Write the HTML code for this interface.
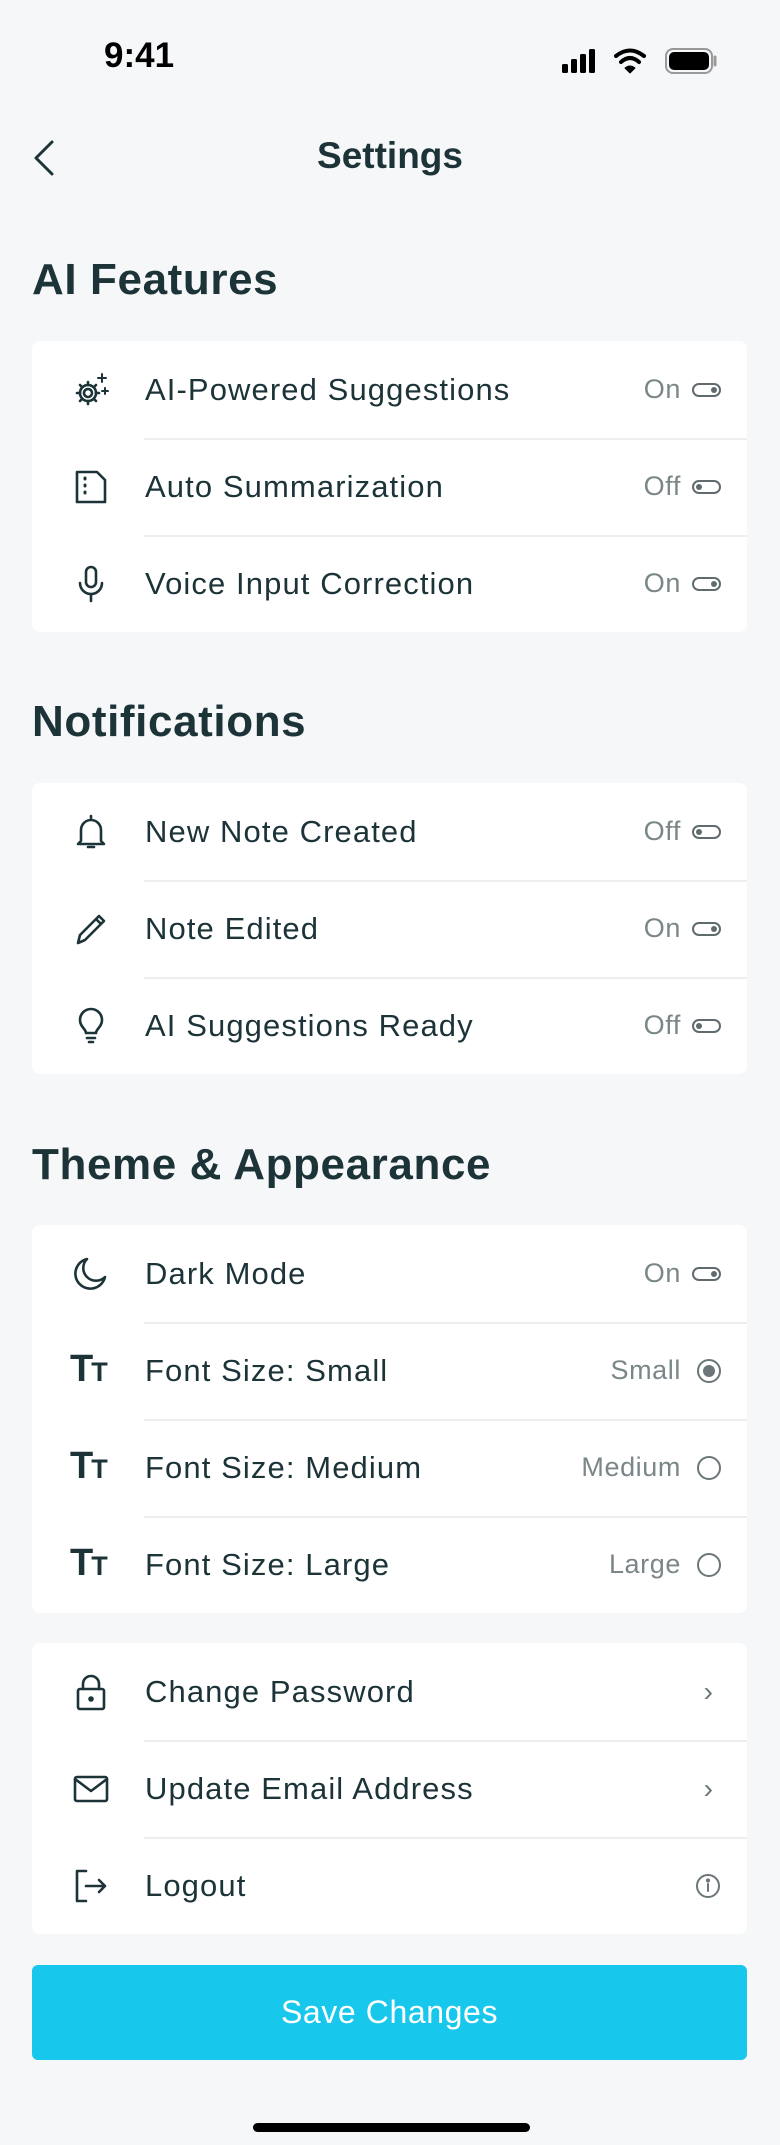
<!DOCTYPE html>
<html><head><meta charset="utf-8"><style>
*{margin:0;padding:0;box-sizing:border-box}
body{width:780px;height:2145px;background:#f6f7f9;font-family:"Liberation Sans",sans-serif;color:#1c3338;position:relative;overflow:hidden}
.abs{position:absolute}
.h{position:absolute;left:32px;font-size:44px;font-weight:bold;letter-spacing:0.6px}
.card{position:absolute;left:32px;width:715px;background:#fff;border-radius:8px}
.row{height:97px;position:relative}
.row+.row:before{content:"";position:absolute;left:112px;right:0;top:0;border-top:2px solid #eceef0}
.ic{position:absolute;left:40px;top:30px;width:38px;height:38px}
.t{position:absolute;left:113px;top:0;line-height:97px;font-size:31px;letter-spacing:1.1px}
.v{position:absolute;right:66px;top:0;line-height:97px;font-size:27px;color:#7a8688;letter-spacing:0.6px}
.tg{position:absolute;right:26px;top:42px;width:29px;height:14px;border:2px solid #5f6b6e;border-radius:7px}
.tg:after{content:"";position:absolute;right:2px;top:2px;width:6px;height:6px;border-radius:50%;background:#5f6b6e}
.rd{position:absolute;right:26px;top:37px;width:24px;height:24px;border:2px solid #6b7678;border-radius:50%}
.rd.on:after{content:"";position:absolute;left:4px;top:4px;width:12px;height:12px;border-radius:50%;background:#6b7678}
.ch{position:absolute;right:34px;top:33px;font-size:28px;color:#6b7678}
svg{fill:none;stroke:#1c3338;stroke-width:2.6;stroke-linecap:round;stroke-linejoin:round}
.tt{position:absolute;left:38px;top:27px;font-weight:bold;font-size:38px;line-height:40px;letter-spacing:-2px}
.tt small{font-size:27px}
</style></head><body>
<div class="abs" style="left:104px;top:36px;font-size:35px;font-weight:bold;color:#000">9:41</div>
<svg class="abs" style="left:560px;top:46px;width:160px;height:30px" viewBox="0 0 160 30">
<g fill="#000" stroke="none"><rect x="2" y="18" width="6" height="9" rx="1.5"/><rect x="11" y="13" width="6" height="14" rx="1.5"/><rect x="20" y="8" width="6" height="19" rx="1.5"/><rect x="29" y="3" width="6" height="24" rx="1.5"/></g>
<path d="M56 10 Q70 -1 84 10" stroke="#000" stroke-width="4"/><path d="M61 16 Q70 8 79 16" stroke="#000" stroke-width="4"/><path d="M65 22 L70 27 L75 22 Q70 18 65 22Z" fill="#000" stroke="#000" stroke-width="1"/>
<rect x="106" y="3" width="46" height="24" rx="7" stroke="#999" stroke-width="2"/><rect x="109" y="6" width="40" height="18" rx="5" fill="#000" stroke="none"/><path d="M155 11 v8" stroke="#999" stroke-width="3"/>
</svg>
<svg class="abs" style="left:30px;top:138px;width:30px;height:40px" viewBox="0 0 30 40"><path d="M22 4 L6 20 L22 36" stroke-width="3"/></svg>
<div class="abs" style="left:0;width:780px;text-align:center;top:135px;font-size:37px;font-weight:bold">Settings</div>

<div class="h" style="top:255px">AI Features</div>
<div class="card" style="top:341px">
<div class="row"><svg class="ic" viewBox="0 0 38 38"><circle cx="16" cy="22" r="4"/><path d="M16 11v3M16 30v3M5 22h3M24 22h3M8 14l2 2M22 28l2 2M8 30l2-2M22 16l2-2"/><circle cx="16" cy="22" r="8"/><path d="M30 3v8M26 7h8M33 17v6M30 20h6" stroke-width="2"/></svg><div class="t">AI-Powered Suggestions</div><div class="v">On</div><div class="tg"></div></div>
<div class="row"><svg class="ic" viewBox="0 0 38 38"><path d="M5 4h20l8 8v22H5z"/><path d="M13 10v1M13 17v1M13 24v1" stroke-width="3"/></svg><div class="t">Auto Summarization</div><div class="v">Off</div><div class="tg" style="transform:scaleX(-1)"></div></div>
<div class="row"><svg class="ic" viewBox="0 0 38 38"><rect x="14" y="2" width="10" height="20" rx="5"/><path d="M8 18a11 11 0 0 0 22 0M19 29v7"/></svg><div class="t">Voice Input Correction</div><div class="v">On</div><div class="tg"></div></div>
</div>

<div class="h" style="top:697px">Notifications</div>
<div class="card" style="top:783px">
<div class="row"><svg class="ic" viewBox="0 0 38 38"><path d="M9 28V17a10 10 0 0 1 20 0v11l3 3H6z M19 3v4M16 34h6"/></svg><div class="t">New Note Created</div><div class="v">Off</div><div class="tg" style="transform:scaleX(-1)"></div></div>
<div class="row"><svg class="ic" viewBox="0 0 38 38"><path d="M6 33l2-8L27 6l5 5-19 19z M24 9l5 5"/></svg><div class="t">Note Edited</div><div class="v">On</div><div class="tg"></div></div>
<div class="row"><svg class="ic" viewBox="0 0 38 38"><path d="M14 26c0-4-6-6-6-13a11 11 0 0 1 22 0c0 7-6 9-6 13zM15 31h8M17 35h4"/></svg><div class="t">AI Suggestions Ready</div><div class="v">Off</div><div class="tg" style="transform:scaleX(-1)"></div></div>
</div>

<div class="h" style="top:1140px">Theme &amp; Appearance</div>
<div class="card" style="top:1225px">
<div class="row"><svg class="ic" viewBox="0 0 38 38"><path d="M15 4a15 15 0 1 0 18 18A12 12 0 0 1 15 4z"/></svg><div class="t">Dark Mode</div><div class="v">On</div><div class="tg"></div></div>
<div class="row"><div class="tt">T<small>T</small></div><div class="t">Font Size: Small</div><div class="v">Small</div><div class="rd on"></div></div>
<div class="row"><div class="tt">T<small>T</small></div><div class="t">Font Size: Medium</div><div class="v">Medium</div><div class="rd"></div></div>
<div class="row"><div class="tt">T<small>T</small></div><div class="t">Font Size: Large</div><div class="v">Large</div><div class="rd"></div></div>
</div>

<div class="card" style="top:1643px">
<div class="row"><svg class="ic" viewBox="0 0 38 38"><rect x="6" y="16" width="26" height="20" rx="2"/><path d="M11 16v-5a8 8 0 0 1 16 0v5"/><circle cx="19" cy="26" r="1.5" fill="#1c3338"/></svg><div class="t">Change Password</div><div class="ch">›</div></div>
<div class="row"><svg class="ic" viewBox="0 0 38 38"><rect x="3" y="7" width="32" height="24" rx="2"/><path d="M3 9l16 12 16-12"/></svg><div class="t">Update Email Address</div><div class="ch">›</div></div>
<div class="row"><svg class="ic" viewBox="0 0 38 38"><path d="M14 4H5v30h9M14 19h19M27 13l6 6-6 6"/></svg><div class="t">Logout</div><svg class="abs" style="right:26px;top:36px;width:26px;height:26px" viewBox="0 0 26 26"><circle cx="13" cy="13" r="11" stroke="#6b7678" stroke-width="2"/><path d="M13 11v7" stroke="#6b7678" stroke-width="2"/><circle cx="13" cy="7.5" r="0.8" fill="#6b7678" stroke="#6b7678"/></svg></div>
</div>

<div class="abs" style="left:32px;top:1965px;width:715px;height:95px;background:#17c7ec;border-radius:6px;color:#fff;font-size:32px;letter-spacing:0.6px;text-align:center;line-height:95px">Save Changes</div>
<div class="abs" style="left:253px;top:2123px;width:277px;height:9px;background:#000;border-radius:5px"></div>
</body></html>
